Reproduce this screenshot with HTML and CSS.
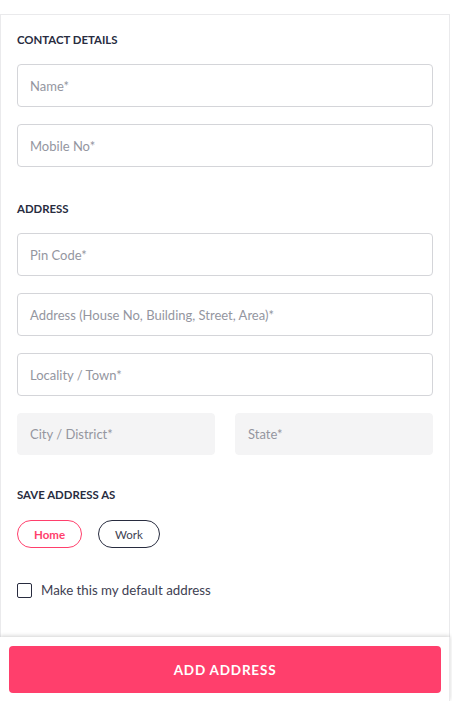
FILE: index.html
```html
<!DOCTYPE html>
<html>
<head>
<meta charset="utf-8">
<link rel="stylesheet" href="styles.css">
</head>
<body>
<div class="card">
  <div class="heading">CONTACT DETAILS</div>
  <div class="fields">
    <div class="field">Name*</div>
    <div class="field">Mobile No*</div>
  </div>
  <div class="heading heading-gap">ADDRESS</div>
  <div class="fields">
    <div class="field">Pin Code*</div>
    <div class="field">Address (House No, Building, Street, Area)*</div>
    <div class="field">Locality / Town*</div>
    <div class="row">
      <div class="field field-disabled">City / District*</div>
      <div class="field field-disabled">State*</div>
    </div>
  </div>
  <div class="heading heading-gap2">SAVE ADDRESS AS</div>
  <div class="chips">
    <div class="chip chip-active">Home</div>
    <div class="chip">Work</div>
  </div>
  <div class="check">
    <span class="box"></span>
    <span class="check-label">Make this my default address</span>
  </div>
</div>
<div class="footer">
  <div class="btn">ADD ADDRESS</div>
</div>
</body>
</html>
```
FILE: styles.css
```css
* { box-sizing: border-box; }
body {
  margin: 0;
  font-family: Lato, "Open Sans", sans-serif;
  color: #282c3f;
  background: #fff;
}
.card {
  margin-top: 14px;
  width: 450px;
  min-height: 700px;
  border: 1px solid #eaeaec;
  padding: 17px 16px 100px 16px;
}
.heading {
  font-size: 11.4px;
  font-weight: 700;
  line-height: 16px;
  color: #282c3f;
  margin-bottom: 16px;
}
.heading-gap { margin-top: 34px; }
.heading-gap2 { margin-top: 32px; margin-bottom: 17px; }
.fields {
  display: flex;
  flex-direction: column;
  gap: 17px;
}
.field {
  height: 43px;
  border: 1px solid #d4d5d9;
  border-radius: 4px;
  display: flex;
  align-items: center;
  padding-left: 12px;
  font-size: 13px;
  color: #94969f;
}
.row {
  display: grid;
  grid-template-columns: 1fr 1fr;
  gap: 20px;
}
.field-disabled {
  background: #f4f4f5;
  border-color: #f4f4f5;
  height: 42px;
}
.chips {
  display: flex;
  gap: 16px;
}
.chip {
  height: 28px;
  border: 1px solid #282c3f;
  border-radius: 14px;
  padding: 0 16px;
  display: flex;
  align-items: center;
  font-size: 11.5px;
  color: #3e4152;
}
.chip-active {
  border-color: #ff3f6c;
  color: #ff3f6c;
  font-weight: 700;
}
.check {
  margin-top: 32px;
  display: flex;
  align-items: center;
  gap: 9px;
  height: 20px;
}
.box {
  width: 15px;
  height: 15px;
  border: 1px solid #282c3f;
  border-radius: 2px;
}
.check-label {
  font-size: 13.3px;
  color: #3e4152;
}
.footer {
  position: fixed;
  left: 0;
  bottom: 0;
  width: 450px;
  height: 64px;
  background: #fff;
  box-shadow: 0 -1px 4px rgba(0,0,0,0.18);
  border-right: 1px solid #eaeaec;
  padding: 9px 8px 8px 9px;
}
.btn {
  height: 47px;
  background: #ff3f6c;
  border-radius: 4px;
  display: flex;
  align-items: center;
  justify-content: center;
  color: #fff;
  font-size: 13.5px;
  font-weight: 700;
  letter-spacing: 0.8px;
}
```
